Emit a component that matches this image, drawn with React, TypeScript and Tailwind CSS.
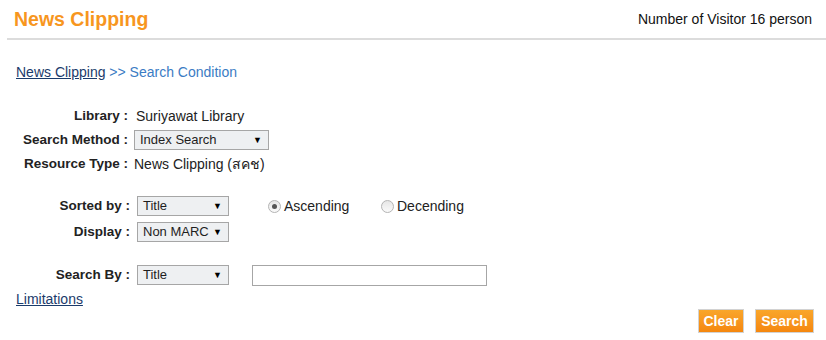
import React from 'react'

const FakeSelect = ({ value, width }: { value: string; width: string }) => (
  <div
    className={`${width} h-[20px] flex items-center justify-between pl-[5px] pr-[6px] bg-[#eef0f2] border border-[#a6a6a6] text-[13px] text-[#1e1e1e]`}
  >
    <span>{value}</span>
    <span className="text-[9px] leading-none text-black">▼</span>
  </div>
)

const Radio = ({ checked, label }: { checked?: boolean; label: string }) => (
  <div className="flex items-center">
    <span className="w-[13px] h-[13px] rounded-full border border-[#b4b4b4] bg-gradient-to-b from-[#e6e6e6] to-[#fafafa] flex items-center justify-center">
      {checked && <span className="w-[5px] h-[5px] rounded-full bg-[#555]" />}
    </span>
    <span className="ml-[3px]">{label}</span>
  </div>
)

const App = () => (
  <div className="w-[826px] h-[340px] bg-white text-[14px] leading-4 text-[#222] font-['Liberation_Sans',Arial,sans-serif]">
    <div className="h-[38px] flex items-center justify-between pl-[14px] pr-[14px]">
      <h1 className="text-[19.5px] font-bold text-[#f7961e]">News Clipping</h1>
      <p className="text-[#111]">Number of Visitor 16 person</p>
    </div>
    <div className="ml-[7px] h-[2px] bg-[#dcdcdc]" />

    <div className="mt-[24px] pl-[16px] h-4">
      <a href="#" className="underline text-[#1b3b6b]">News Clipping</a>
      <span className="text-[#3b7cc4]"> &gt;&gt; Search Condition</span>
    </div>

    <div className="mt-[24px]">
      <div className="h-6 flex items-center">
        <span className="w-[128px] text-right font-bold text-[13.5px]">Library :</span>
        <span className="ml-[8px]">Suriyawat Library</span>
      </div>
      <div className="h-6 flex items-center">
        <span className="w-[128px] text-right font-bold text-[13.5px]">Search Method :</span>
        <div className="ml-[6px]">
          <FakeSelect value="Index Search" width="w-[135px]" />
        </div>
      </div>
      <div className="h-[23px] flex items-center">
        <span className="w-[128px] text-right font-bold text-[13.5px]">Resource Type :</span>
        <span className="ml-[6px]">News Clipping (สคช)</span>
      </div>
    </div>

    <div className="mt-[18px]">
      <div className="h-[26px] flex items-center">
        <span className="w-[130px] text-right font-bold text-[13.5px]">Sorted by :</span>
        <div className="ml-[7px]">
          <FakeSelect value="Title" width="w-[92px]" />
        </div>
        <div className="ml-[39px] w-[113px]">
          <Radio checked label="Ascending" />
        </div>
        <Radio label="Decending" />
      </div>
      <div className="h-[26px] flex items-center">
        <span className="w-[130px] text-right font-bold text-[13.5px]">Display :</span>
        <div className="ml-[7px]">
          <FakeSelect value="Non MARC" width="w-[92px]" />
        </div>
      </div>
    </div>

    <div className="mt-[17px] h-[26px] flex items-center">
      <span className="w-[130px] text-right font-bold text-[13.5px]">Search By :</span>
      <div className="ml-[7px]">
        <FakeSelect value="Title" width="w-[92px]" />
      </div>
      <input className="ml-[23px] w-[235px] h-[21px] border border-[#a6a6a6] bg-white outline-none" />
    </div>

    <div className="mt-[3px] pl-[16px] h-4">
      <a href="#" className="underline text-[#1b3b6b]">Limitations</a>
    </div>

    <div className="mt-[2px] flex justify-end gap-[11px] pr-[12px]">
      <button className="w-[46px] h-[24px] border border-[#d2d2d2] bg-gradient-to-b from-[#f9a62a] to-[#f5870e] text-white font-bold">
        Clear
      </button>
      <button className="w-[59px] h-[24px] border border-[#d2d2d2] bg-gradient-to-b from-[#f9a62a] to-[#f5870e] text-white font-bold">
        Search
      </button>
    </div>
  </div>
)

export default App
